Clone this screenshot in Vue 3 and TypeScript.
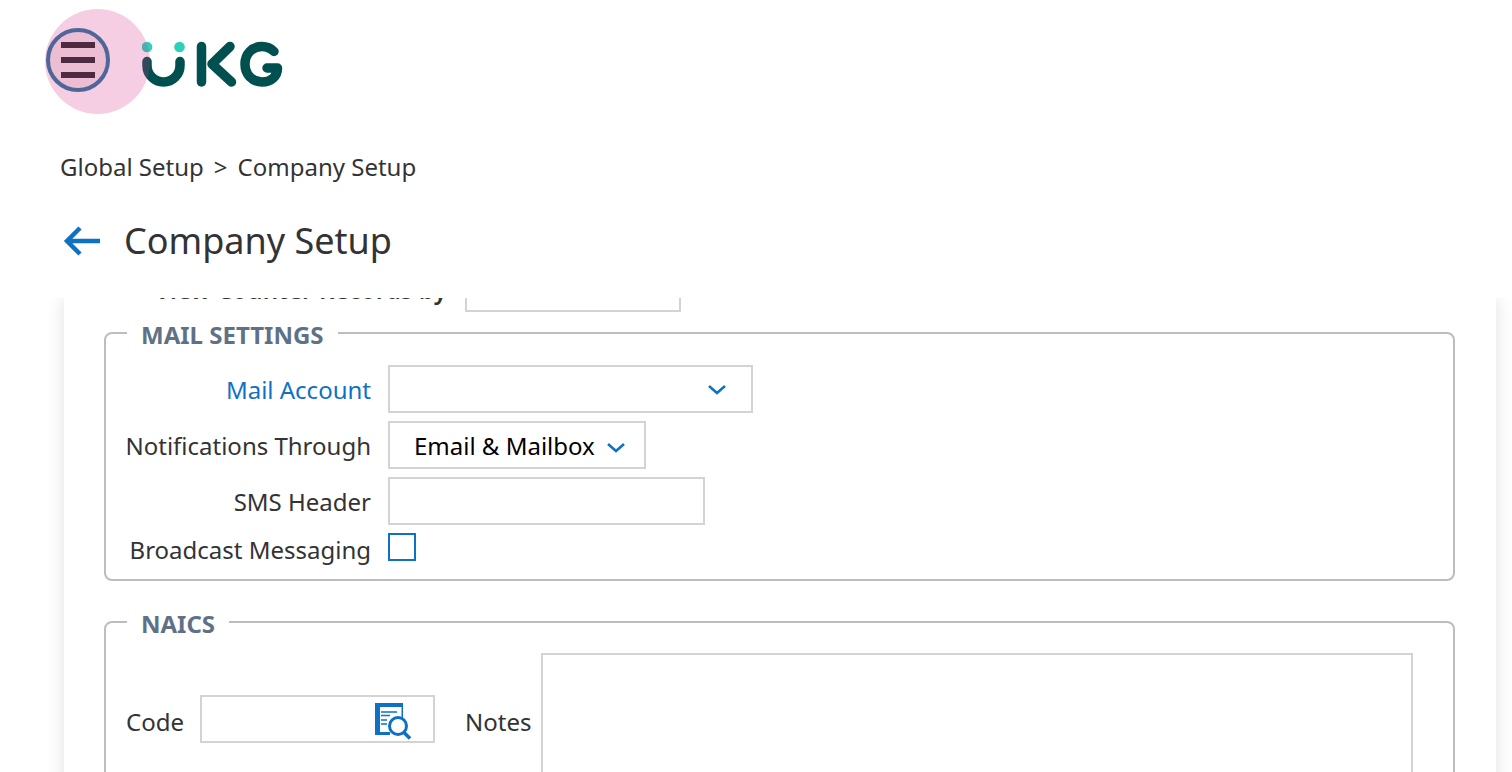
<script setup lang="ts">
const mailRows = [
  { label: "Notifications Through", value: "Email & Mailbox" },
];
</script>

<template>
  <div class="page">
    <header class="top">
      <div class="brand">
        <button class="menu-btn" aria-label="Menu">
          <span class="bar" />
          <span class="bar" />
          <span class="bar" />
        </button>
        <svg class="logo" width="142" height="48" viewBox="0 0 142 48">
          <circle cx="5" cy="6" r="5.300" fill="#2dd0bb" />
          <circle cx="37.500" cy="6" r="5.300" fill="#2dd0bb" />
          <g fill="none" stroke="#00504f" stroke-width="9.500" stroke-linecap="round" stroke-linejoin="round">
            <path d="M5 20.500v4a16.500 16.500 0 0 0 33 0v-4" />
            <path d="M59.500 5.500V41" />
            <path d="M88 5.500 70 23l19.500 18" />
            <path d="M132 10.500C128.500 7 124.500 5.500 120 5.500 110 5.500 103 13 103 23s7 18 17 18c9 0 15.500-5.500 15.500-14H125" />
          </g>
        </svg>
      </div>
      <nav class="crumbs">
        <span>Global Setup</span>
        <span class="sep">&gt;</span>
        <span>Company Setup</span>
      </nav>
      <div class="title-row">
        <svg class="back" width="38" height="30" viewBox="0 0 38 30">
          <path d="M37 15H4M17 2 4 15l13 13" fill="none" stroke="#0d72c4" stroke-width="4.500" />
        </svg>
        <h1>Company Setup</h1>
      </div>
    </header>

    <main class="card">
      <div class="cut-row">
        <label>View Counter Records by</label>
        <div class="field cut-field" />
      </div>

      <fieldset class="group mail">
        <legend>MAIL SETTINGS</legend>
        <div class="form">
          <label class="link">Mail Account</label>
          <div class="field select wide">
            <svg class="chev" width="18" height="10" viewBox="0 0 18 10"><path d="M1 1l8 7 8-7" fill="none" stroke="#0d72c4" stroke-width="2.500" /></svg>
          </div>
          <template v-for="row in mailRows" :key="row.label">
            <label>{{ row.label }}</label>
            <div class="field select notif">
              <span>{{ row.value }}</span>
              <svg class="chev" width="18" height="10" viewBox="0 0 18 10"><path d="M1 1l8 7 8-7" fill="none" stroke="#0d72c4" stroke-width="2.500" /></svg>
            </div>
          </template>
          <label>SMS Header</label>
          <div class="field sms" />
          <label class="check-label">Broadcast Messaging</label>
          <div class="check" />
        </div>
      </fieldset>

      <fieldset class="group naics">
        <legend>NAICS</legend>
        <div class="naics-row">
          <label>Code</label>
          <div class="field code">
            <svg class="lookup" width="38" height="38" viewBox="0 0 38 38">
              <path d="M2 1h28v15h-1.500V5H7v25h10v3H2z" fill="#0d72c4" />
              <path d="M8 10h16M8 13.500h9M8 18h6M8 22h6" stroke="#0d72c4" stroke-width="1.700" fill="none" />
              <circle cx="25" cy="24" r="8.500" fill="#fff" stroke="#0d72c4" stroke-width="3" />
              <path d="M31 30.500l6 6" stroke="#0d72c4" stroke-width="3.500" fill="none" />
            </svg>
          </div>
          <label class="notes-label">Notes</label>
          <div class="field notes" />
        </div>
      </fieldset>
    </main>
  </div>
</template>

<style scoped>
.page {
  height: 772px;
  overflow: hidden;
  background: #fff;
  font-family: "Noto Sans", sans-serif;
  color: #333;
  font-size: 24px;
}

.top {
  height: 298px;
  position: relative;
  z-index: 2;
  background: #fff;
  box-sizing: border-box;
  padding-left: 60px;
}

.brand {
  position: relative;
  height: 148px;
}

.brand::before {
  content: "";
  position: absolute;
  left: -15px;
  top: 9px;
  width: 105px;
  height: 105px;
  border-radius: 50%;
  background: #d6338a;
  opacity: 0.24;
  z-index: 1;
}

.menu-btn {
  position: absolute;
  left: -14px;
  top: 28px;
  width: 64px;
  height: 64px;
  box-sizing: border-box;
  border: 4px solid #4f6699;
  border-radius: 50%;
  background: rgba(180, 100, 130, 0.15);
  display: flex;
  flex-direction: column;
  align-items: center;
  justify-content: center;
  gap: 9px;
  padding: 0;
  z-index: 2;
}

.bar {
  width: 34px;
  height: 6px;
  background: #4d2a3f;
}

.logo {
  position: absolute;
  left: 82px;
  top: 41px;
}

.crumbs {
  display: flex;
  gap: 10px;
  line-height: 36px;
  height: 36px;
  margin-top: 1px;
}

.title-row {
  display: flex;
  align-items: center;
  gap: 23px;
  margin-top: 31px;
  height: 50px;
}

.back {
  margin-left: 3px;
}

h1 {
  margin: 0;
  font-size: 36px;
  font-weight: 400;
  line-height: 50px;
}

.card {
  width: 1432px;
  margin-left: 64px;
  height: 500px;
  box-sizing: border-box;
  padding: 0 41px 0 40px;
  background: #fff;
  box-shadow: 0 0 18px rgba(0, 0, 0, 0.12);
  position: relative;
}

label {
  white-space: nowrap;
}

.cut-row {
  display: grid;
  grid-template-columns: 343px 216px;
  grid-template-rows: 14px;
  column-gap: 18px;
  align-items: end;
  height: 14px;
}

.cut-row label {
  justify-self: end;
  line-height: 30px;
  margin-bottom: 7px;
  font-weight: 600;
  letter-spacing: 0.1px;
}

.field {
  box-sizing: border-box;
  border: 2px solid #d3d3d3;
  background: #fff;
  height: 48px;
}

.group {
  margin: 0;
  padding: 0;
  border: 2px solid #bdbdbd;
  border-radius: 8px;
  min-width: 0;
}

.group legend {
  margin-left: 21px;
  padding: 4px 14px 0;
  font-size: 24px;
  font-weight: 700;
  color: #5f7186;
  line-height: 32px;
}

.mail {
  margin-top: 3px;
  height: 262px;
}

.form {
  display: grid;
  grid-template-columns: 265px auto;
  justify-content: start;
  justify-items: start;
  align-items: center;
  column-gap: 17px;
  row-gap: 8px;
  margin-top: 14px;
}

.form label {
  justify-self: end;
  line-height: 32px;
  padding-top: 2px;
}

.form .check-label {
  padding-top: 1px;
}

.link {
  color: #0d72c4;
}

.select {
  display: flex;
  align-items: center;
  justify-content: space-between;
}

.wide {
  width: 365px;
  justify-content: flex-end;
  padding-right: 25px;
}

.notif {
  width: 258px;
  padding: 0 19px 0 24px;
  color: #000;
}

.chev {
  margin-top: 2px;
}

.notif .chev {
  margin-top: 6px;
}

.sms {
  width: 317px;
}

.check {
  width: 28px;
  height: 28px;
  box-sizing: border-box;
  border: 2px solid #0d72c4;
  margin-top: -5px;
}

.naics {
  margin-top: 23px;
  height: 300px;
}

.naics-row {
  display: flex;
  align-items: center;
  padding-left: 20px;
  margin-top: 13px;
}

.naics-row label {
  padding-top: 4px;
}

.code {
  width: 235px;
  margin-left: 16px;
  display: flex;
  align-items: center;
  justify-content: flex-end;
  padding-right: 22px;
}

.lookup {
  margin-top: 4px;
}

.notes-label {
  margin-left: 30px;
}

.notes {
  width: 872px;
  height: 132px;
  margin-left: 10px;
}
</style>

<style>
html,
body {
  margin: 0;
  background: #fff;
  overflow: hidden;
}
</style>
